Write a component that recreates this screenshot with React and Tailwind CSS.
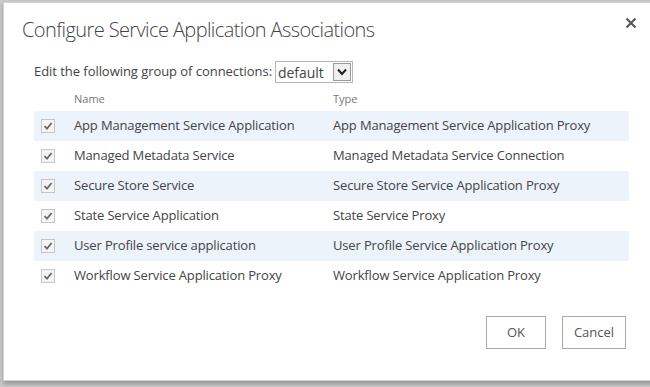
import React, { useState } from "react";

const rows = [
  ["App Management Service Application", "App Management Service Application Proxy"],
  ["Managed Metadata Service", "Managed Metadata Service Connection"],
  ["Secure Store Service", "Secure Store Service Application Proxy"],
  ["State Service Application", "State Service Proxy"],
  ["User Profile service application", "User Profile Service Application Proxy"],
  ["Workflow Service Application Proxy", "Workflow Service Application Proxy"],
];

const Check = () => (
  <span className="w-[14px] h-[14px] border border-[#c6c6c6] bg-[#f4f4f4] flex items-center justify-center">
    <svg width="10" height="10" viewBox="0 0 10 10">
      <path d="M1.5 5.2 L4 7.6 L8.6 2" fill="none" stroke="#6a6a6a" strokeWidth="1.8" />
    </svg>
  </span>
);

export default function App() {
  const [group] = useState("default");
  return (
    <div className="w-[650px] h-[387px] bg-[#c9c9c9] pt-[2px] pl-[3px] overflow-hidden font-['Open_Sans',sans-serif] text-[#444]">
      <div className="w-[660px] h-[379px] bg-white border border-[#d4d4d4] shadow-[0_3px_4px_rgba(0,0,0,0.25)] relative">
        <button className="absolute left-[621px] top-[14px]">
          <svg width="12" height="12" viewBox="0 0 12 12">
            <path d="M1.5 1.5 L10.5 10.5 M10.5 1.5 L1.5 10.5" stroke="#5a5a5a" strokeWidth="2.2" />
          </svg>
        </button>
        <h1 className="pl-[18px] pt-[13px] text-[20px] font-light leading-[28px] tracking-[-0.6px] text-[#444]">
          Configure Service Application Associations
        </h1>
        <div className="pl-[30px] pt-[17px] flex items-center gap-[3px] text-[13px] tracking-[-0.05px]">
          <span>Edit the following group of connections:</span>
          <div className="w-[78px] h-[22px] border border-[#b5b5b5] flex items-center">
            <span className="flex-1 pl-[2px] text-[14px]">{group}</span>
            <span className="w-[18px] h-[18px] mr-[1px] border border-[#9a9a9a] bg-[#f0f0f0] flex items-center justify-center">
              <svg width="10" height="8" viewBox="0 0 10 8">
                <path d="M1 1.5 L5 6 L9 1.5" fill="none" stroke="#222" strokeWidth="2" />
              </svg>
            </span>
          </div>
        </div>
        <div className="ml-[30px] w-[595px] mt-[5px]">
          <div className="flex h-[23px] items-center text-[11px] text-[#777]">
            <span className="w-[299px] pl-[40px]">Name</span>
            <span>Type</span>
          </div>
          {rows.map(([name, type], i) => (
            <div
              key={name}
              className={`flex h-[30px] items-center text-[13px] tracking-[-0.15px] ${i % 2 === 0 ? "bg-[#edf3fb]" : "bg-white"}`}
            >
              <span className="w-[40px] pl-[7px] flex"><Check /></span>
              <span className="w-[259px]">{name}</span>
              <span>{type}</span>
            </div>
          ))}
        </div>
        <div className="flex justify-end gap-[16px] pr-[36px] pt-[25px] text-[13px] text-[#555]">
          <button className="w-[60px] h-[33px] border border-[#ababab] bg-white">OK</button>
          <button className="w-[64px] h-[33px] border border-[#ababab] bg-white">Cancel</button>
        </div>
      </div>
    </div>
  );
}
